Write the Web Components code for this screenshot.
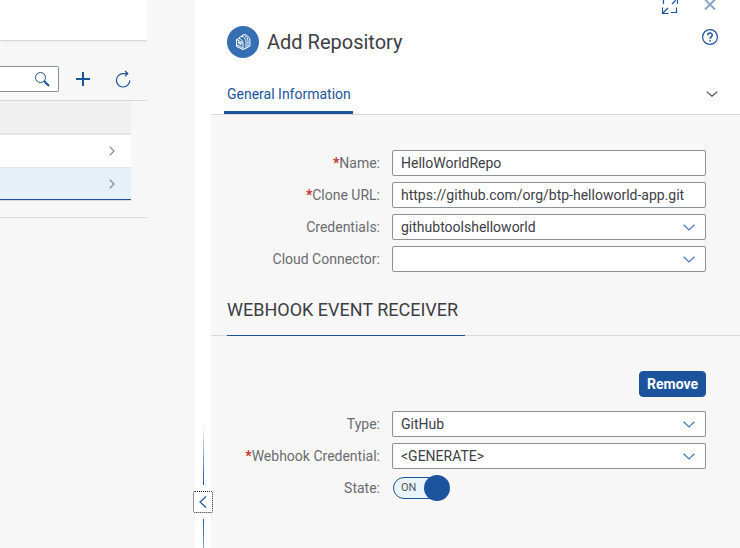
<!DOCTYPE html>
<html lang="en">
<head>
<meta charset="utf-8">
<title>Add Repository</title>
<style>
:root{--blue:#1b539c;--text:#3c4045;--label:#6a6d70;--line:#d9d9d9;--field:#89919a;--bg:#f7f7f7}
body{margin:0;font-family:Roboto,"Liberation Sans",sans-serif;font-size:14px;line-height:20px;color:var(--text);background:var(--bg)}
</style>
</head>
<body>
<app-shell>
  <repo-list slot="list"></repo-list>
  <pane-splitter slot="splitter"></pane-splitter>
  <detail-pane slot="detail" heading="Add Repository" tab="General Information">
    <form-fields>
      <form-field label="Name" required kind="text" value="HelloWorldRepo"></form-field>
      <form-field label="Clone URL" required kind="text" value="https://github.com/org/btp-helloworld-app.git"></form-field>
      <form-field label="Credentials" kind="select" value="githubtoolshelloworld"></form-field>
      <form-field label="Cloud Connector" kind="select" value=""></form-field>
    </form-fields>
    <section-title>WEBHOOK EVENT RECEIVER</section-title>
    <action-row><ui-button>Remove</ui-button></action-row>
    <form-fields class="webhook">
      <form-field label="Type" kind="select" value="GitHub"></form-field>
      <form-field label="Webhook Credential" required kind="select" value="&lt;GENERATE&gt;"></form-field>
      <form-field label="State" kind="switch" value="ON"></form-field>
    </form-fields>
  </detail-pane>
</app-shell>
<script>
const define = (name, render) => customElements.define(name, class extends HTMLElement {
  connectedCallback() {
    if (this.shadowRoot) return;
    const t = document.createElement('template');
    t.innerHTML = '<style>*{box-sizing:border-box}button{font:inherit;color:inherit;cursor:pointer}</style>' + render(this);
    this.attachShadow({mode: 'open'}).append(t.content.cloneNode(true));
  }
});
const esc = s => (s || '').replace(/&/g, '&amp;').replace(/</g, '&lt;').replace(/>/g, '&gt;').replace(/"/g, '&quot;');

define('app-shell', () => `
<style>
:host{display:grid;grid-template-columns:195px 16px minmax(0,1fr);min-height:100vh;overflow:hidden}
::slotted(*){min-width:0}
</style>
<slot name="list"></slot><slot name="splitter"></slot><slot name="detail"></slot>`);

define('repo-list', () => `
<style>
:host{display:block;padding-right:48px;background:var(--bg)}
header{height:41px;background:#fff;border-bottom:1px solid var(--line);box-shadow:0 2px 2px -1px #0000000d}
.bar{display:flex;align-items:center;padding:25px 16px 8px 0;border-bottom:1px solid var(--line)}
.search{display:flex;align-items:center;flex:1;min-width:0;height:26px;border:1px solid var(--field);border-left:0;border-radius:0 2px 2px 0;background:#fff;padding-right:8px}
input{flex:1;min-width:0;width:0;border:0;outline:0;background:none;font:inherit}
button{border:0;background:none;padding:0;display:flex;color:var(--blue)}
.add{margin:0 24px 0 16px}
svg{display:block;fill:none;stroke:currentColor}
.list{padding:0 16px 16px 0;border-bottom:1px solid var(--line)}
table{width:100%;border-collapse:separate;border-spacing:0}
th{height:34px;padding:0;background:#f0f0f0;border-bottom:2px solid #e4e4e4}
td{height:33px;padding:0 16px 0 0;background:#fff;border-bottom:1px solid #e4e4e4;color:#85888b}
td svg{margin-left:auto}
.selected td{background:#e5f0f9;height:32px;border-bottom:1px solid var(--blue)}
.end{height:1px;background:var(--line)}
</style>
<header></header>
<div class="bar">
  <div class="search"><input type="search" aria-label="Search"><button aria-label="Search"><svg width="16" height="16" viewBox="0 0 16 16"><circle cx="6.5" cy="6.5" r="5"/><path d="M10 10l5 5" stroke-width="2"/></svg></button></div>
  <button class="add" aria-label="Add"><svg width="16" height="16" viewBox="0 0 16 16" stroke-width="2"><path d="M1 8h14M8 1v14"/></svg></button>
  <button aria-label="Refresh"><svg width="16" height="18" viewBox="0 0 16 18" stroke-width="1.2"><path d="M12.5 3.6H8.300A6.700 6.700 0 1 0 14.800 10.500M10 1l2.800 2.600L10 6.200"/></svg></button>
</div>
<div class="list"><table aria-label="Repositories">
  <tr><th></th></tr>
  <tr><td><svg width="6" height="10" viewBox="0 0 6 10" stroke-width="1.2"><path d="M.7.700 5 5 .7 9.300"/></svg></td></tr>
  <tr class="selected"><td><svg width="6" height="10" viewBox="0 0 6 10" stroke-width="1.2"><path d="M.7.700 5 5 .7 9.300"/></svg></td></tr>
</table><div class="end"></div></div>`);

define('pane-splitter', () => `
<style>
:host{display:flex;flex-direction:column;align-items:center;background:#fff;padding-top:425px;position:relative;z-index:1}
i{width:1px;flex:none}
.up{height:60px;background:linear-gradient(transparent,var(--blue))}
.down{flex:1;background:linear-gradient(var(--blue),transparent) 0 0/1px 60px no-repeat}
button{flex:none;width:20px;height:22px;margin:6px 0;padding:0;background:#fff;border:1px dotted #222;border-radius:2px;display:flex;align-items:center;justify-content:center;color:var(--blue)}
</style>
<i class="up"></i>
<button aria-label="Collapse"><svg width="8" height="12" viewBox="0 0 8 12" fill="none" stroke="currentColor" stroke-width="1.200"><path d="M7 .500 1 6l6 5.500"/></svg></button>
<i class="down"></i>`);

define('detail-pane', el => `
<style>
:host{display:block;background:var(--bg)}
header{background:#fff;border-bottom:1px solid var(--line);padding:0 22px 0 16px}
button{border:0;background:none;padding:0;display:flex;color:var(--blue)}
svg{display:block;fill:none;stroke:currentColor}
.window{display:flex;justify-content:flex-end;gap:26px;height:14px;padding-right:2px}
.title{display:flex;align-items:center;gap:8px;margin-top:12px;height:32px}
.avatar{width:32px;height:32px;border-radius:50%;background:#366eb2;color:#fff;display:flex;align-items:center;justify-content:center}
h1{margin:0;flex:1;font-weight:400;font-size:20px;line-height:24px}
.help{align-self:flex-start;margin-top:3px}
nav{display:flex;justify-content:space-between;align-items:center;margin-top:16px}
a{color:var(--blue);text-decoration:none;padding:10px 2px 7px 3px;margin-left:-3px;border-bottom:3px solid var(--blue);border-radius:2px 2px 0 0;line-height:20px}
.more{color:#45494d}
</style>
<header>
  <div class="window">
    <button aria-label="Full screen"><svg width="16" height="14" viewBox="0 2 16 14" stroke-width="1.200"><path d="M1.500 6V1.500H6M10 .500h5.500V6M15 1l-5 5M14.500 9.500v5H9M.500 9.500v6h6M1 15l5-5"/></svg></button>
    <button aria-label="Close" style="color:#86a6cf"><svg width="12" height="14" viewBox="0 0 12 14" stroke-width="2"><path d="M1-.500l10 10M11-.500l-10 10"/></svg></button>
  </div>
  <div class="title">
    <span class="avatar"><svg width="16" height="18" viewBox="0 0 16 18" stroke-width="1"><path d="M1.500 6.500v7L8 16.500V10zM1.500 6.500 4 5.500c2 .400 4 2.300 4 4.500M4.500 5.500V4.200L7 3.300c2 .600 4 2.700 4 5v7L8 16.500M7 3.300V2.400L9.500 1.500c2.800.600 5.500 3.200 5.500 5.800V13l-4 2.300M9.500 2.500c2 .900 3.500 3 3.500 5.300v6M2 12.200l5.500 2.500M3.500 9v1.500l2.500 1.200V10z"/></svg></span>
    <h1>${esc(el.getAttribute('heading'))}</h1>
    <button class="help" aria-label="Help"><svg width="16" height="16" viewBox="0 0 16 16" stroke-width="1.200"><circle cx="8" cy="8" r="7.400"/><path d="M5.700 6.200C5.700 3.300 10.300 3.300 10.300 6.100 10.300 7.900 8 7.900 8 9.800M8 11v1.500" stroke-width="1.500"/></svg></button>
  </div>
  <nav><a href="#general">${esc(el.getAttribute('tab'))}</a>
    <button class="more" aria-label="More sections"><svg width="12" height="6" viewBox="0 0 12 6" stroke-width="1.200"><path d="M.700.600 6 5.200 11.300.600"/></svg></button></nav>
</header>
<main><slot></slot></main>`);

define('form-fields', () => `
<style>:host{display:grid;gap:6px;padding:35px 34px 0 16px}:host(.webhook){padding-top:14px}</style><slot></slot>`);

define('section-title', () => `
<style>
:host{display:flex;padding-left:16px;margin-top:26px;box-shadow:inset 0 -1px var(--line)}
h2{margin:0;min-width:238px;font-weight:400;font-size:18px;line-height:24px;padding-bottom:13px;border-bottom:1px solid var(--blue)}
</style><h2><slot></slot></h2>`);

define('action-row', () => `
<style>:host{display:flex;justify-content:flex-end;padding:35px 34px 0 16px}</style><slot></slot>`);

define('ui-button', () => `
<style>button{display:block;height:26px;padding:0 7px;border:1px solid var(--blue);border-radius:4px;background:var(--blue);color:#fff;font-weight:700;line-height:20px}</style>
<button><slot></slot></button>`);

define('form-field', el => {
  const v = esc(el.getAttribute('value')), kind = el.getAttribute('kind');
  const control = {
    text: `<input class="box" id="c" type="text" value="${v}">`,
    select: `<span class="wrap"><select class="box" id="c"><option>${v}</option></select><svg width="12" height="7" viewBox="0 0 12 7"><path d="M.600.800 6 6 11.400.800"/></svg></span>`,
    switch: `<span class="switch"><input id="c" type="checkbox" role="switch" checked><span class="on">${v}</span><span class="knob"></span></span>`
  }[kind];
  return `
<style>
:host{display:grid;grid-template-columns:153px minmax(0,1fr);column-gap:12px;align-items:center}
label{text-align:right;color:var(--label);white-space:nowrap}
b{color:#c9302c}
.box{display:block;width:100%;height:26px;margin:0;padding:0 8px;border:1px solid var(--field);border-radius:2px;background:#fff;color:var(--text);font:inherit;appearance:none;outline:0}
.wrap{display:block;position:relative}
.wrap svg{position:absolute;right:11px;top:10px;fill:none;stroke:#4678b5;stroke-width:1.200;pointer-events:none}
.switch{position:relative;display:flex;align-items:center;justify-content:space-between;width:57px;height:26px;margin-left:1px}
.switch input{position:absolute;inset:2px 2px 2px 0;width:55px;height:22px;margin:0;appearance:none;border:1px solid var(--blue);border-radius:11px;background:#ebf4fd}
.on{position:relative;padding-left:8px;font-size:11px;line-height:20px;color:#51555a;pointer-events:none}
.knob{position:relative;width:26px;height:26px;border-radius:50%;background:var(--blue);pointer-events:none}
</style>
<label for="c">${el.hasAttribute('required') ? '<b>*</b>' : ''}${esc(el.getAttribute('label'))}:</label>${control}`;
});
</script>
</body>
</html>
